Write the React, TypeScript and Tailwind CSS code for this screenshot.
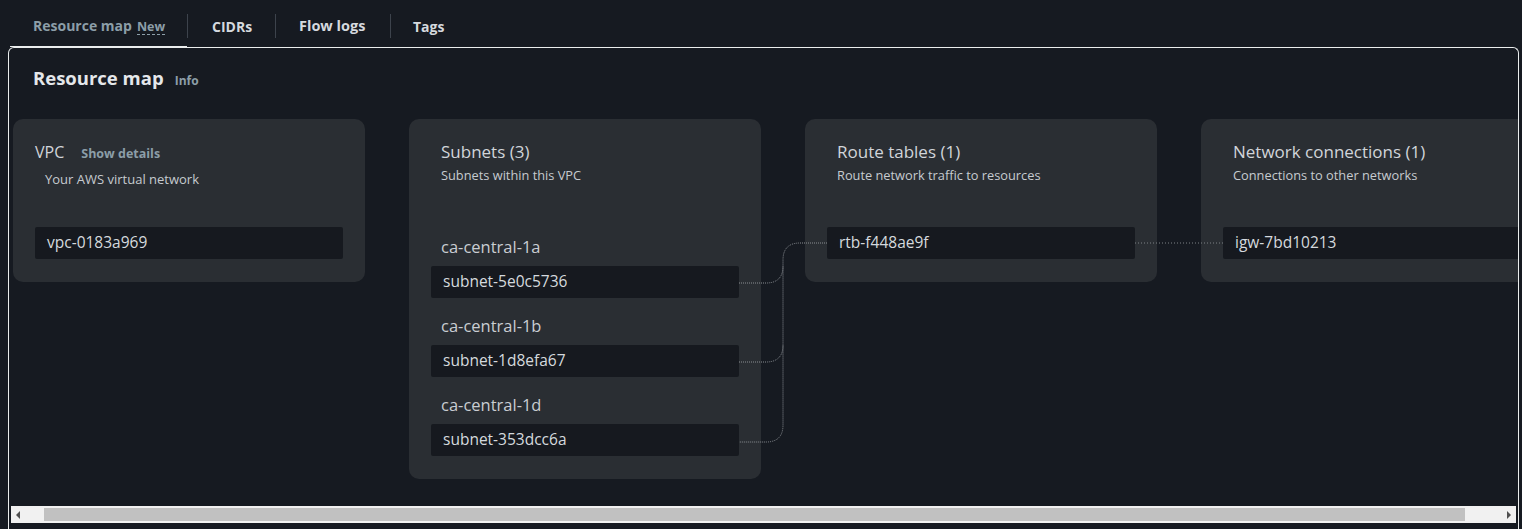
import React from "react";

type Zone = { zone: string; id: string };

const subnets: Zone[] = [
  { zone: "ca-central-1a", id: "subnet-5e0c5736" },
  { zone: "ca-central-1b", id: "subnet-1d8efa67" },
  { zone: "ca-central-1d", id: "subnet-353dcc6a" },
];

const IdBox: React.FC<{ id: string }> = ({ id }) => (
  <div className="h-[32px] bg-[#16191f] rounded-[2px] pl-[12px] flex items-center text-[15.5px] text-[#d5d9de]">{id}</div>
);

const CardHead: React.FC<{ title: string; sub: string }> = ({ title, sub }) => (
  <div className="px-[10px]">
    <div className="text-[17px] leading-[22px] text-[#d1d5da]">{title}</div>
    <div className="mt-[4px] text-[12.8px] leading-[16px] text-[#c6cbd0]">{sub}</div>
  </div>
);

const App: React.FC = () => {
  return (
    <div className="w-[1522px] h-[529px] bg-[#161a21] overflow-hidden font-['Open_Sans',sans-serif]">
      {/* tabs */}
      <div className="relative h-[47px] pt-[14px] pl-[9px] flex">
        <div className="w-[178px] h-[24px] pl-[24px] flex items-baseline">
          <span className="text-[14px] font-bold text-[#8c9ea8] leading-[24px]">Resource map</span>
          <span className="ml-[5px] text-[12.5px] font-bold text-[#8c9ea8] leading-[14px] border-b border-dashed border-[#8c9ea8]">New</span>
        </div>
        <div className="w-px h-[24px] bg-[#3d434c]" />
        <div className="w-[87px] h-[24px] pl-[24px] flex items-center text-[14px] font-bold text-[#d5d9de]">CIDRs</div>
        <div className="w-px h-[24px] bg-[#3d434c]" />
        <div className="w-[114px] h-[24px] pl-[23px] flex items-center text-[14.5px] font-bold text-[#d5d9de]">Flow logs</div>
        <div className="w-px h-[24px] bg-[#3d434c]" />
        <div className="h-[24px] pl-[22px] flex items-center text-[14px] font-bold text-[#d5d9de]">Tags</div>
        <div className="absolute bottom-0 left-[10px] w-[177px] h-px bg-[#eaeded]" />
      </div>

      {/* container */}
      <div className="ml-[8px] w-[1511px] h-[490px] border border-b-0 border-[#eaeded] rounded-t-[6px]">
        <div className="pt-[18px] pl-[24px] flex items-baseline">
          <h2 className="text-[18.5px] leading-[24px] font-bold text-[#e4e7ea]">Resource map</h2>
          <span className="ml-[11px] text-[12px] font-bold text-[#8c9ea8]">Info</span>
        </div>

        <div className="relative h-[416px] overflow-hidden">
          <div className="pt-[29px] pl-[4px] flex items-start gap-[44px]">
            {/* VPC */}
            <div className="w-[352px] shrink-0 bg-[#2a2e33] rounded-[10px] px-[22px] pt-[22px] pb-[23px]">
              <div className="flex items-baseline">
                <span className="text-[16px] leading-[22px] text-[#d1d5da]">VPC</span>
                <span className="ml-[17px] text-[12.5px] font-bold text-[#8c9ea8]">Show details</span>
              </div>
              <div className="mt-[7px] pl-[10px] text-[13px] leading-[16px] text-[#c6cbd0]">Your AWS virtual network</div>
              <div className="mt-[40px]">
                <IdBox id="vpc-0183a969" />
              </div>
            </div>

            {/* Subnets */}
            <div className="w-[352px] shrink-0 bg-[#2a2e33] rounded-[10px] px-[22px] pt-[22px] pb-[23px]">
              <CardHead title="Subnets (3)" sub="Subnets within this VPC" />
              <div className="mt-[54px] flex flex-col gap-[18px]">
                {subnets.map((s) => (
                  <div key={s.id}>
                    <div className="px-[10px] text-[16.5px] leading-[20px] text-[#c9cdd2]">{s.zone}</div>
                    <div className="mt-[9px]">
                      <IdBox id={s.id} />
                    </div>
                  </div>
                ))}
              </div>
            </div>

            {/* Route tables */}
            <div className="w-[352px] shrink-0 bg-[#2a2e33] rounded-[10px] px-[22px] pt-[22px] pb-[23px]">
              <CardHead title="Route tables (1)" sub="Route network traffic to resources" />
              <div className="mt-[44px]">
                <IdBox id="rtb-f448ae9f" />
              </div>
            </div>

            {/* Network connections */}
            <div className="w-[352px] shrink-0 bg-[#2a2e33] rounded-[10px] px-[22px] pt-[22px] pb-[23px]">
              <CardHead title="Network connections (1)" sub="Connections to other networks" />
              <div className="mt-[44px]">
                <IdBox id="igw-7bd10213" />
              </div>
            </div>
          </div>

          {/* connectors */}
          <svg className="absolute left-0 top-0" width="1509" height="416" viewBox="9 90 1509 416" fill="none">
            <g stroke="#8a8e93" strokeWidth="1" strokeDasharray="1 1">
              <path d="M827 243 H800 Q783 243 783 260 V425 Q783 442 766 442 H739" />
              <path d="M739 283 H766 Q783 283 783 266" />
              <path d="M739 362 H766 Q783 362 783 345" />
            </g>
            <path d="M1135 243 H1223" stroke="#7d8186" strokeWidth="1" strokeDasharray="1 2" />
          </svg>
        </div>

        {/* horizontal scrollbar */}
        <div className="mx-[2px] h-[17px] bg-[#f1f1f1] flex items-center">
          <div className="w-[33px] h-[13px] flex items-center pl-[5px]">
            <div className="w-0 h-0 border-y-[4px] border-y-transparent border-r-[4px] border-r-[#505050]" />
          </div>
          <div className="w-[1421px] h-[13px] bg-[#c1c1c1]" />
          <div className="flex-1 h-[13px] flex items-center justify-end pr-[5px]">
            <div className="w-0 h-0 border-y-[4px] border-y-transparent border-l-[4px] border-l-[#505050]" />
          </div>
        </div>
      </div>
    </div>
  );
};

export default App;
